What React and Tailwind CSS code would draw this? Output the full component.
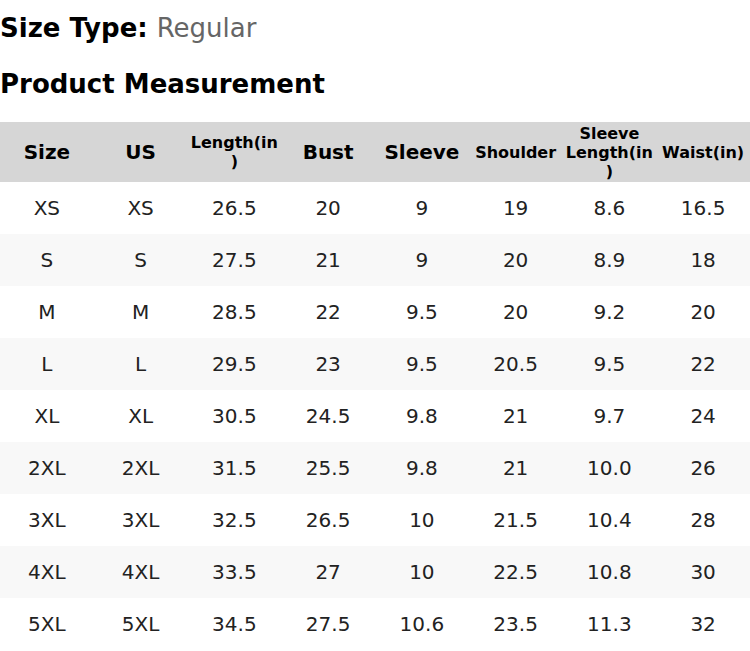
const HEADERS = [
  { label: 'Size', big: true },
  { label: 'US', big: true },
  { label: 'Length(in)' },
  { label: 'Bust', big: true },
  { label: 'Sleeve', big: true },
  { label: 'Shoulder' },
  { label: 'Sleeve Length(in)' },
  { label: 'Waist(in)' },
]

const ROWS = [
  ['XS', 'XS', '26.5', '20', '9', '19', '8.6', '16.5'],
  ['S', 'S', '27.5', '21', '9', '20', '8.9', '18'],
  ['M', 'M', '28.5', '22', '9.5', '20', '9.2', '20'],
  ['L', 'L', '29.5', '23', '9.5', '20.5', '9.5', '22'],
  ['XL', 'XL', '30.5', '24.5', '9.8', '21', '9.7', '24'],
  ['2XL', '2XL', '31.5', '25.5', '9.8', '21', '10.0', '26'],
  ['3XL', '3XL', '32.5', '26.5', '10', '21.5', '10.4', '28'],
  ['4XL', '4XL', '33.5', '27', '10', '22.5', '10.8', '30'],
  ['5XL', '5XL', '34.5', '27.5', '10.6', '23.5', '11.3', '32'],
]

export default function App() {
  return (
    <div className="w-[750px] bg-white text-black font-['DejaVu_Sans',sans-serif]">
      {/* Title lines */}
      <div className="h-[56px] flex items-center text-[26px] leading-[30px]">
        <span className="font-bold">Size Type:</span>
        <span className="ml-[9px] text-[#666]">Regular</span>
      </div>
      <div className="h-[56px] flex items-center text-[26px] leading-[30px] font-bold">
        Product Measurement
      </div>

      <table className="mt-[10px] w-full table-fixed border-collapse">
        <thead>
          <tr className="h-[60px] bg-[#d6d6d6]">
            {HEADERS.map(({ label, big }) => (
              <th
                key={label}
                className={`p-0 text-center align-middle font-bold ${big ? 'text-[20px] leading-[24px]' : 'text-[16px] leading-[19px] break-all'}`}
              >
                {label === 'Length(in)' ? (
                  <>Length(in<br />)</>
                ) : label === 'Sleeve Length(in)' ? (
                  <>Sleeve<br />Length(in<br />)</>
                ) : (
                  label
                )}
              </th>
            ))}
          </tr>
        </thead>
        <tbody>
          {ROWS.map((row, i) => (
            <tr key={row[0]} className={`h-[52px] ${i % 2 === 1 ? 'bg-[#f8f8f8]' : 'bg-white'}`}>
              {row.map((cell, j) => (
                <td key={j} className="p-0 text-center align-middle text-[20px] leading-[24px] text-[#222]">
                  {cell}
                </td>
              ))}
            </tr>
          ))}
        </tbody>
      </table>
    </div>
  )
}
